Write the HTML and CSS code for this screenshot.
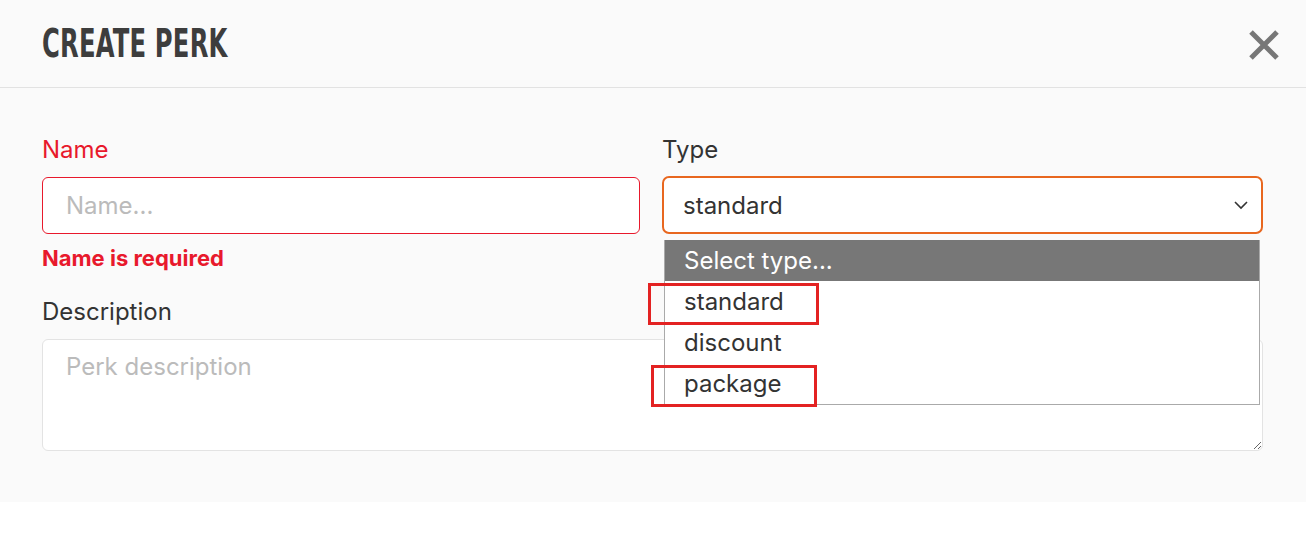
FILE: index.html
```html
<!DOCTYPE html>
<html lang="en">
<head>
    <meta charset="UTF-8">
    <meta name="viewport" content="width=device-width, initial-scale=1.0">
    <title>Create perk</title>

    <link rel="stylesheet" href="styles.css">
</head>
<body>
    <section class="modal">
        <div class="modal_head">
            <h1><span>CREATE PERK</span></h1>
            <button class="close" aria-label="Close">
                <svg width="32" height="30" viewBox="0 0 32 30">
                    <path d="M3 2 L29 28 M29 2 L3 28" stroke="#777" stroke-width="5" fill="none"/>
                </svg>
            </button>
        </div>

        <form class="modal_body" action="">
            <div class="field">
                <label for="name" class="invalid">Name</label>
                <input type="text" id="name" class="input input_error" placeholder="Name...">
                <p class="error">Name is required</p>
            </div>

            <div class="field type_field">
                <label for="type">Type</label>
                <div class="select" id="type">
                    <span>standard</span>
                    <svg width="16" height="10" viewBox="0 0 16 10">
                        <path d="M2 2 L8 8 L14 2" stroke="#333" stroke-width="1.6" fill="none"/>
                    </svg>
                </div>

                <ul class="options">
                    <li class="picked">Select type...</li>
                    <li>standard</li>
                    <li>discount</li>
                    <li>package</li>
                </ul>
                <div class="mark mark_one"></div>
                <div class="mark mark_two"></div>
            </div>

            <div class="field wide">
                <label for="desc">Description</label>
                <textarea id="desc" class="input" placeholder="Perk description"></textarea>
            </div>
        </form>
    </section>
</body>
</html>
```

FILE: styles.css
```css
body{
    margin: 0;
    background-color: white;
    font-family: Inter, Roboto, "Liberation Sans", sans-serif;
    color: #333;
}

.modal{
    background-color: #fafafa;
}

.modal_head{
    display: flex;
    align-items: center;
    justify-content: space-between;
    height: 87px;
    padding: 0 26px 0 42px;
    border-bottom: 1px solid #e2e2e2;
}

h1{
    margin: 0;
    font-family: "Liberation Sans Narrow", "DejaVu Sans Condensed", sans-serif;
    font-stretch: condensed;
    font-weight: bold;
    font-size: 27px;
    color: #3d3d3d;
}
h1 span{
    display: inline-block;
    transform: scaleY(1.45);
    letter-spacing: 0.2px;
}

.close{
    border: none;
    background: transparent;
    padding: 0;
    cursor: pointer;
    display: flex;
    margin-top: 2px;
}

.modal_body{
    display: grid;
    grid-template-columns: 598px 1fr;
    column-gap: 22px;
    row-gap: 26px;
    padding: 48px 43px 51px 42px;
}

.field{
    display: flex;
    flex-direction: column;
}
.wide{
    grid-column: 1 / 3;
}
.type_field{
    position: relative;
    z-index: 2;
}

label{
    font-size: 24px;
    line-height: 28px;
    margin-bottom: 13px;
}
.invalid{
    color: #e8192c;
}

.input{
    font-family: inherit;
    font-size: 24px;
    color: #333;
    background-color: white;
    border: 1px solid #e3e3e3;
    border-radius: 6px;
    padding: 0 23px;
    box-sizing: border-box;
    outline: none;
}
.input::placeholder{
    color: #bbb;
}
input.input{
    height: 57px;
}
.input_error{
    border-color: #e8192c;
}

textarea.input{
    height: 112px;
    padding-top: 12px;
    resize: vertical;
}

.error{
    margin: 10px 0 0;
    font-size: 22px;
    line-height: 28px;
    font-weight: bold;
    color: #e8192c;
}

.select{
    display: flex;
    align-items: center;
    justify-content: space-between;
    height: 58px;
    margin-top: -1px;
    box-sizing: border-box;
    padding: 0 12px 0 19px;
    font-size: 24px;
    background-color: white;
    border: 2px solid #e8671f;
    border-radius: 7px;
}

/* open list of the type select */
.options{
    position: absolute;
    top: 104px;
    left: 2px;
    right: 3px;
    margin: 0;
    padding: 0;
    list-style: none;
    background-color: white;
    border: 1px solid #aaa;
    border-top: none;
}
.options li{
    height: 41px;
    line-height: 41px;
    padding-left: 19px;
    font-size: 24px;
    color: #333;
}
.options .picked{
    background-color: #777;
    color: white;
}

.mark{
    position: absolute;
    border: 3px solid #e32222;
    box-sizing: border-box;
    height: 42px;
}
.mark_one{
    top: 147px;
    left: -14px;
    width: 171px;
}
.mark_two{
    top: 229px;
    left: -11px;
    width: 166px;
}
```
